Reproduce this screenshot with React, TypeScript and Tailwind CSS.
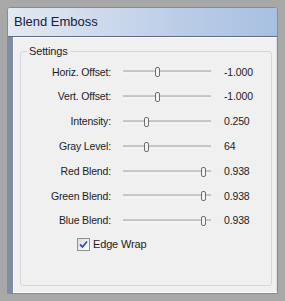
import React from "react";

const rows = [
  { label: "Horiz. Offset:", pos: 0.39, value: "-1.000" },
  { label: "Vert. Offset:", pos: 0.39, value: "-1.000" },
  { label: "Intensity:", pos: 0.26, value: "0.250" },
  { label: "Gray Level:", pos: 0.26, value: "64" },
  { label: "Red Blend:", pos: 0.91, value: "0.938" },
  { label: "Green Blend:", pos: 0.91, value: "0.938" },
  { label: "Blue Blend:", pos: 0.91, value: "0.938" },
];

function Slider({ pos }: { pos: number }) {
  return (
    <div className="relative h-full w-[88px]">
      <div className="absolute left-0 right-0 top-1/2 -translate-y-1/2 h-[3px] border-t border-[#a6a6a6] border-b border-b-white bg-[#e3e3e3]" />
      <div
        className="absolute top-1/2 -translate-y-1/2 -ml-[2px] w-[5px] h-[10px] rounded-[2px] border border-[#6f6f6f] bg-[#f4f4f4]"
        style={{ left: `${pos * 100}%` }}
      />
    </div>
  );
}

export default function App() {
  return (
    <div className="w-[285px] h-[301px] bg-[#a8a8a8] p-[7px] font-['Liberation_Sans',Arial,sans-serif] text-[10.5px] tracking-[-0.15px] text-[#1c1c1c]">
      <div className="h-full flex flex-col border border-[#8c8c8c] rounded-t-[3px] bg-[#f0f0f0] shadow-[inset_0_0_0_1px_#e8e8e8]">
        {/* title */}
        <div className="h-[29px] shrink-0 flex items-center pl-[6px] border-b border-[#5e6e86] bg-gradient-to-r from-[#e4e9f1] via-[#c3d3e9] to-[#a7bfe1] rounded-t-[2px]">
          <span className="text-[13px] tracking-normal text-[#15203a]">Blend Emboss</span>
        </div>

        {/* body */}
        <div className="flex-1 flex">
          <div className="w-[5px] bg-[#7f8ca4]" />
          <div className="flex-1 border border-white border-r-[#d8dde4] pl-[6px] pr-[4px] pt-[7px] pb-[6px] flex">
            <fieldset className="flex-1 border border-[#d0d7df] rounded-[3px] pb-[4px]">
              <legend className="ml-[6px] px-[2px] leading-[13px] text-[11px]">Settings</legend>

              <div className="flex flex-col pt-[2px]">
                {rows.map((r) => (
                  <div key={r.label} className="h-[24.8px] flex items-center">
                    <div className="w-[90px] text-right">{r.label}</div>
                    <div className="ml-[12px] h-full">
                      <Slider pos={r.pos} />
                    </div>
                    <div className="ml-[13px]">{r.value}</div>
                  </div>
                ))}
                <div className="flex items-center h-[20px] pl-[56px] mt-[1px]">
                  <div className="w-[13px] h-[13px] border border-[#8e8f8f] bg-gradient-to-br from-[#dcdcdc] to-white flex items-center justify-center">
                    <svg width="9" height="9" viewBox="0 0 9 9">
                      <path d="M1 4.5 L3.5 7 L8 1.5" fill="none" stroke="#3a4fa8" strokeWidth="1.8" />
                    </svg>
                  </div>
                  <span className="ml-[3px] text-[11px]">Edge Wrap</span>
                </div>
              </div>
            </fieldset>
          </div>
        </div>
      </div>
    </div>
  );
}
